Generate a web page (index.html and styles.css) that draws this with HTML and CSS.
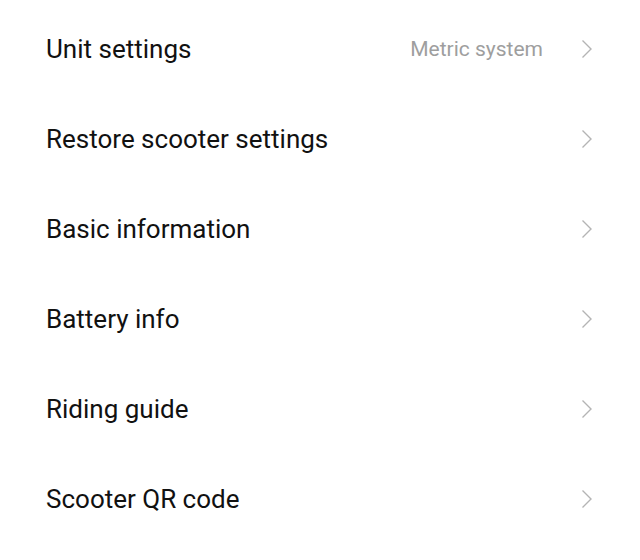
FILE: index.html
```html
<!DOCTYPE html>
<html>
<head>
<meta charset="utf-8">
<link rel="stylesheet" href="styles.css">
</head>
<body>
<div class="list">
  <div class="row"><span class="label">Unit settings</span><span class="value">Metric system</span><svg class="chev" viewBox="0 0 12 20"><path d="M1.5 1.5 L10 10 L1.5 18.5"/></svg></div>
  <div class="row"><span class="label">Restore scooter settings</span><svg class="chev" viewBox="0 0 12 20"><path d="M1.5 1.5 L10 10 L1.5 18.5"/></svg></div>
  <div class="row"><span class="label">Basic information</span><svg class="chev" viewBox="0 0 12 20"><path d="M1.5 1.5 L10 10 L1.5 18.5"/></svg></div>
  <div class="row"><span class="label">Battery info</span><svg class="chev" viewBox="0 0 12 20"><path d="M1.5 1.5 L10 10 L1.5 18.5"/></svg></div>
  <div class="row"><span class="label">Riding guide</span><svg class="chev" viewBox="0 0 12 20"><path d="M1.5 1.5 L10 10 L1.5 18.5"/></svg></div>
  <div class="row"><span class="label">Scooter QR code</span><svg class="chev" viewBox="0 0 12 20"><path d="M1.5 1.5 L10 10 L1.5 18.5"/></svg></div>
</div>
</body>
</html>
```
FILE: styles.css
```css
html, body { margin: 0; padding: 0; background: #fff; }
body { font-family: Roboto, "Noto Sans", sans-serif; }
.list { display: flex; flex-direction: column; padding-top: 4px; }
.row { height: 90px; display: flex; align-items: center; padding: 0 47px 0 46px; }
.label { flex: 1; font-size: 26px; color: #111; }
.value { font-size: 21px; color: #9e9e9e; margin-right: 38px; }
.chev { width: 12px; height: 20px; fill: none; stroke: #b4b4b4; stroke-width: 1.4; }
```
